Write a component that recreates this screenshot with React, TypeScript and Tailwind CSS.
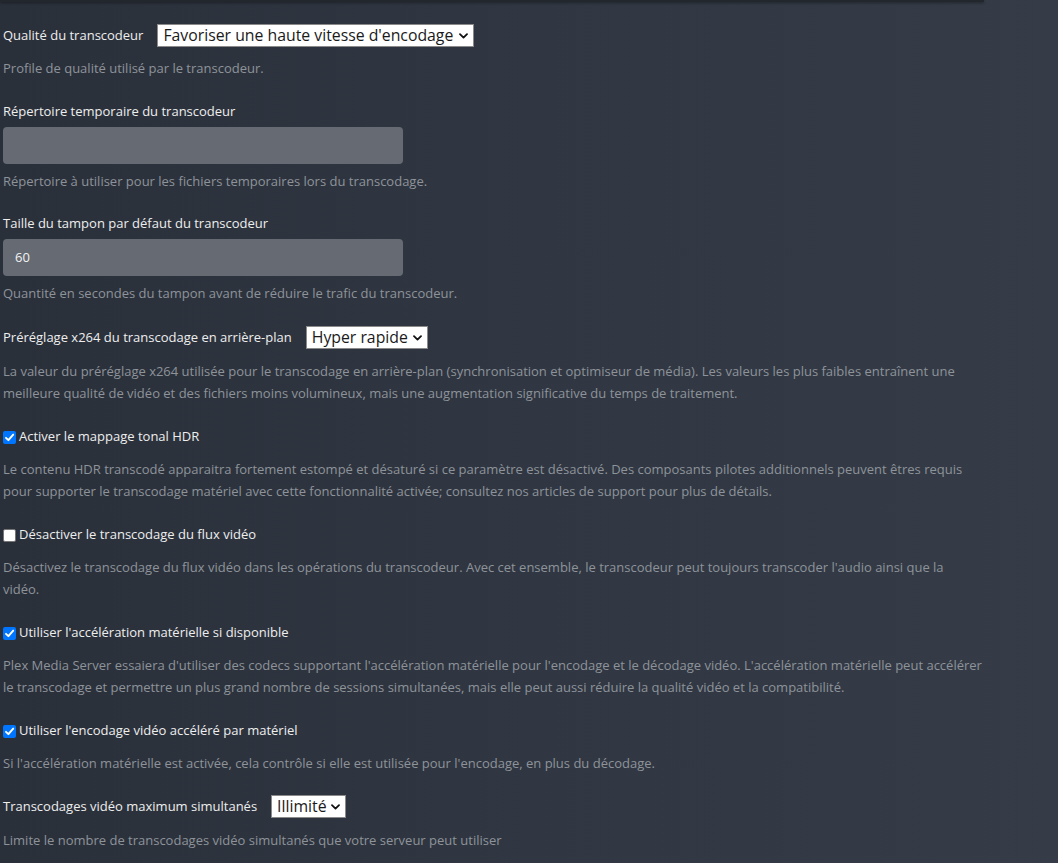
import React from "react";

const font = { fontFamily: '"Open Sans", "Noto Sans", sans-serif' };

function Chevron() {
  return (
    <svg width="9" height="6" viewBox="0 0 9 6" className="shrink-0">
      <path d="M1 1.2 L4.5 4.6 L8 1.2" fill="none" stroke="#111" strokeWidth="1.8" strokeLinecap="round" strokeLinejoin="round" />
    </svg>
  );
}

function Select({ value, width }: { value: string; width: string }) {
  return (
    <div
      className={`ml-[14px] flex h-[23px] items-center justify-between border border-[#8a8a8a] bg-white pl-[5px] pr-[5px] text-[15.8px] leading-none text-[#1a1a1a] ${width}`}
      style={font}
    >
      <span className="whitespace-nowrap">{value}</span>
      <Chevron />
    </div>
  );
}

function Desc({ lines, className = "" }: { lines: string[]; className?: string }) {
  return (
    <div className={`text-[13px] leading-[22px] text-[#8e939a] ${className}`}>
      {lines.map((l, i) => (
        <div key={i} className="whitespace-nowrap">
          {l}
        </div>
      ))}
    </div>
  );
}

function Check({ checked, label }: { checked: boolean; label: string }) {
  return (
    <div className="flex h-[20px] items-center">
      {checked ? (
        <div className="flex h-[13px] w-[13px] items-center justify-center rounded-[2px] bg-[#0075ff]">
          <svg width="11" height="11" viewBox="0 0 11 11">
            <path d="M2 5.8 L4.4 8.2 L9.2 2.6" fill="none" stroke="#fff" strokeWidth="1.9" strokeLinecap="round" strokeLinejoin="round" />
          </svg>
        </div>
      ) : (
        <div className="h-[13px] w-[13px] rounded-[2px] border border-[#767676] bg-white" />
      )}
      <span className="ml-[3px] text-[13px] text-[#eeeeee]">{label}</span>
    </div>
  );
}

export default function App() {
  return (
    <div
      className="min-h-screen w-full bg-[linear-gradient(90deg,#2a303a_0%,#303742_50%,#353c47_100%)]"
      style={font}
    >
      <div className="h-[2px] w-[984px] bg-[#22272e] shadow-[0_1px_3px_rgba(0,0,0,0.45)]" />
      <div className="w-[984px] pl-[3px] pt-[22px]">
        {/* Group 1 */}
        <div className="mb-[22px]">
          <div className="flex h-[23px] items-center">
            <span className="text-[13px] text-[#eeeeee]">Qualité du transcodeur</span>
            <Select value="Favoriser une haute vitesse d'encodage" width="w-[317px]" />
          </div>
          <Desc className="mt-[10px]" lines={["Profile de qualité utilisé par le transcodeur."]} />
        </div>

        {/* Group 2 */}
        <div className="mb-[21px]">
          <div className="h-[20px] text-[13px] leading-[20px] text-[#eeeeee]">Répertoire temporaire du transcodeur</div>
          <div className="mt-[6px] h-[37px] w-[400px] rounded-[4px] bg-[#666b73]" />
          <Desc className="mt-[6px]" lines={["Répertoire à utiliser pour les fichiers temporaires lors du transcodage."]} />
        </div>

        {/* Group 3 */}
        <div className="mb-[22px]">
          <div className="h-[20px] text-[13px] leading-[20px] text-[#eeeeee]">Taille du tampon par défaut du transcodeur</div>
          <div className="mt-[6px] flex h-[37px] w-[400px] items-center rounded-[4px] bg-[#666b73] pl-[12px] text-[13px] text-[#f2f2f2]">
            60
          </div>
          <Desc className="mt-[6px]" lines={["Quantité en secondes du tampon avant de réduire le trafic du transcodeur."]} />
        </div>

        {/* Group 4 */}
        <div className="mb-[23px]">
          <div className="flex h-[23px] items-center">
            <span className="text-[13px] text-[#eeeeee]">Préréglage x264 du transcodage en arrière-plan</span>
            <Select value="Hyper rapide" width="w-[122px]" />
          </div>
          <Desc
            className="mt-[11px]"
            lines={[
              "La valeur du préréglage x264 utilisée pour le transcodage en arrière-plan (synchronisation et optimiseur de média). Les valeurs les plus faibles entraînent une",
              "meilleure qualité de vidéo et des fichiers moins volumineux, mais une augmentation significative du temps de traitement.",
            ]}
          />
        </div>

        {/* Group 5 */}
        <div className="mb-[23px]">
          <Check checked label="Activer le mappage tonal HDR" />
          <Desc
            className="mt-[11px]"
            lines={[
              "Le contenu HDR transcodé apparaitra fortement estompé et désaturé si ce paramètre est désactivé. Des composants pilotes additionnels peuvent êtres requis",
              "pour supporter le transcodage matériel avec cette fonctionnalité activée; consultez nos articles de support pour plus de détails.",
            ]}
          />
        </div>

        {/* Group 6 */}
        <div className="mb-[23px]">
          <Check checked={false} label="Désactiver le transcodage du flux vidéo" />
          <Desc
            className="mt-[11px]"
            lines={[
              "Désactivez le transcodage du flux vidéo dans les opérations du transcodeur. Avec cet ensemble, le transcodeur peut toujours transcoder l'audio ainsi que la",
              "vidéo.",
            ]}
          />
        </div>

        {/* Group 7 */}
        <div className="mb-[23px]">
          <Check checked label="Utiliser l'accélération matérielle si disponible" />
          <Desc
            className="mt-[11px]"
            lines={[
              "Plex Media Server essaiera d'utiliser des codecs supportant l'accélération matérielle pour l'encodage et le décodage vidéo. L'accélération matérielle peut accélérer",
              "le transcodage et permettre un plus grand nombre de sessions simultanées, mais elle peut aussi réduire la qualité vidéo et la compatibilité.",
            ]}
          />
        </div>

        {/* Group 8 */}
        <div className="mb-[21px]">
          <Check checked label="Utiliser l'encodage vidéo accéléré par matériel" />
          <Desc
            className="mt-[11px]"
            lines={["Si l'accélération matérielle est activée, cela contrôle si elle est utilisée pour l'encodage, en plus du décodage."]}
          />
        </div>

        {/* Group 9 */}
        <div className="mb-[22px]">
          <div className="flex h-[23px] items-center">
            <span className="text-[13px] text-[#eeeeee]">Transcodages vidéo maximum simultanés</span>
            <Select value="Illimité" width="w-[75px]" />
          </div>
          <Desc
            className="mt-[11px]"
            lines={["Limite le nombre de transcodages vidéo simultanés que votre serveur peut utiliser"]}
          />
        </div>
      </div>
    </div>
  );
}
